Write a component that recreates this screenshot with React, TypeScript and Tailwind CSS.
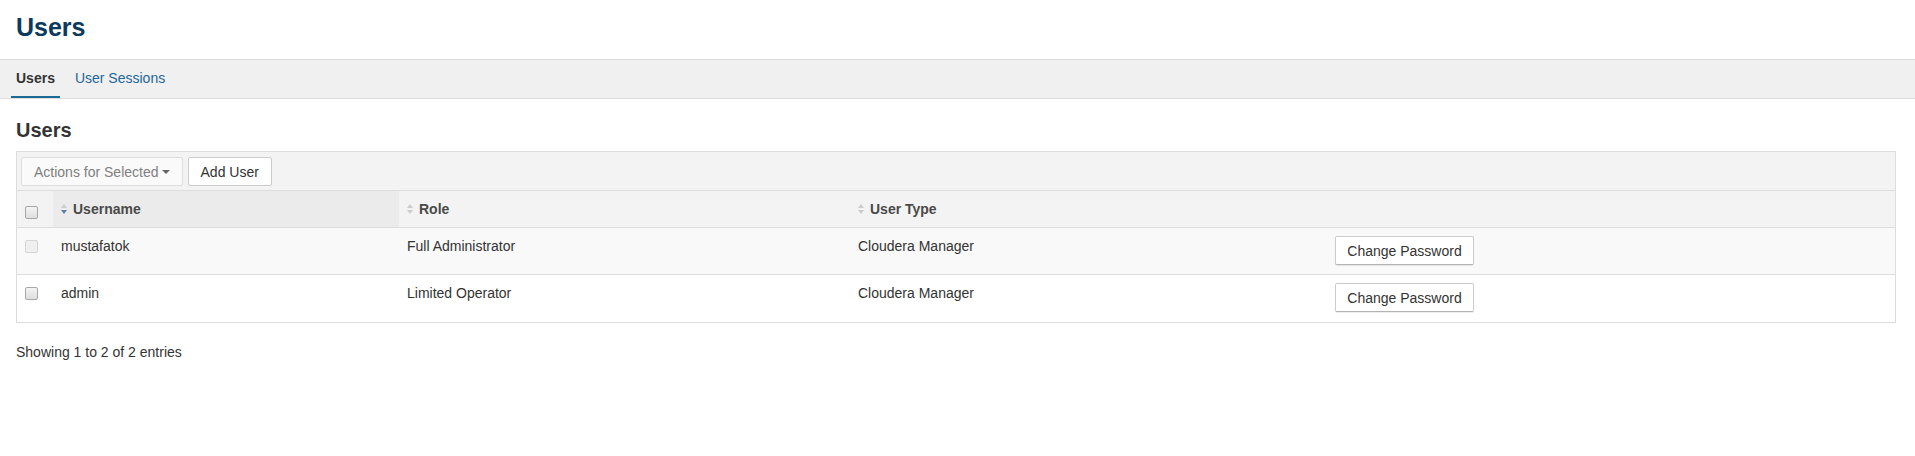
import React from "react";

const SortIcon = ({ active }: { active?: boolean }) => (
  <svg width="6" height="10" viewBox="0 0 6 10" className="shrink-0">
    <polygon points="0,4 3,0 6,4" fill={active ? "#c7ccd2" : "#cccccc"} />
    <polygon points="0,6 3,10 6,6" fill={active ? "#5f7f9f" : "#cccccc"} />
  </svg>
);

const Checkbox = ({ light }: { light?: boolean }) => (
  <div
    className={
      light
        ? "w-[13px] h-[13px] rounded-[2px] border border-[#d4d4d4] bg-[#efefef]"
        : "w-[13px] h-[13px] rounded-[2px] border border-[#a8a8a8] bg-gradient-to-b from-[#f4f4f4] to-[#dedede]"
    }
  />
);

const ChangeButton = () => (
  <button className="h-[29px] w-[139px] flex items-center justify-center bg-white border border-[#cccccc] border-b-[#b3b3b3] rounded-[2px] shadow-[0_1px_1px_rgba(0,0,0,0.08)] text-[14px] leading-[20px] text-[#333333]">
    Change Password
  </button>
);

const cols = "grid grid-cols-[36px_346px_451px_477px_1fr]";

export default function App() {
  const rows = [
    { name: "mustafatok", role: "Full Administrator", type: "Cloudera Manager", bg: "bg-[#f9f9f9]", light: true },
    { name: "admin", role: "Limited Operator", type: "Cloudera Manager", bg: "bg-white", light: false },
  ];
  return (
    <div className="w-[1915px] min-h-[456px] bg-white text-[#333333] font-['Liberation_Sans',Arial,sans-serif]">
      <div className="h-[59px] pl-4 pt-[13px]">
        <h1 className="text-[25px] leading-[28px] font-bold text-[#0c3a5c]">Users</h1>
      </div>
      <div className="h-[40px] bg-[#f0f0f0] border-t border-b border-[#dddddd] flex pl-[11px] gap-[10px]">
        <div className="px-[5px] pt-[8px] pb-[8px] border-b-2 border-[#1b6a96] text-[14px] leading-[20px] font-bold text-[#333333]">
          Users
        </div>
        <div className="px-[5px] pt-[8px] pb-[8px] text-[14px] leading-[20px] text-[#23679a]">
          User Sessions
        </div>
      </div>
      <div className="pl-4 pr-[19px]">
        <h2 className="mt-[20px] text-[20px] leading-[22px] font-bold text-[#333333]">Users</h2>
        <div className="mt-[10px] border border-[#dddddd]">
          <div className="h-[39px] bg-[#f3f3f3] border-b border-[#dddddd] flex items-start gap-[5px] pl-1 pt-[5px]">
            <button className="h-[29px] flex items-center px-3 bg-[#fafafa] border border-[#dddddd] rounded-[2px] text-[14px] leading-[20px] text-[#808080]">
              Actions for Selected
              <svg width="8" height="4" viewBox="0 0 8 4" className="ml-[3px]">
                <polygon points="0,0 8,0 4,4" fill="#666666" />
              </svg>
            </button>
            <button className="h-[29px] flex items-center px-3 bg-white border border-[#cccccc] rounded-[2px] text-[14px] leading-[20px] text-[#333333]">
              Add User
            </button>
          </div>
          <div className={`${cols} h-[37px] bg-[#f3f3f3] border-b border-[#dddddd] text-[14px] leading-[20px] font-bold text-[#4a4a4a]`}>
            <div className="pl-2 pt-[15px]">
              <Checkbox />
            </div>
            <div className="bg-[#ebebeb] px-2 pt-2 flex items-start gap-[6px]">
              <div className="pt-[5px]"><SortIcon active /></div>
              <span>Username</span>
            </div>
            <div className="px-2 pt-2 flex items-start gap-[6px]">
              <div className="pt-[5px]"><SortIcon /></div>
              <span>Role</span>
            </div>
            <div className="px-2 pt-2 flex items-start gap-[6px]">
              <div className="pt-[5px]"><SortIcon /></div>
              <span>User Type</span>
            </div>
            <div />
          </div>
          {rows.map((r, i) => (
            <div
              key={r.name}
              className={`${cols} h-[47px] ${r.bg} ${i === 0 ? "border-b border-[#dddddd]" : ""} text-[14px] leading-[20px] text-[#333333]`}
            >
              <div className="pl-2 pt-3">
                <Checkbox light={r.light} />
              </div>
              <div className="px-2 pt-2">{r.name}</div>
              <div className="px-2 pt-2">{r.role}</div>
              <div className="px-2 pt-2">{r.type}</div>
              <div className="px-2 pt-2">
                <ChangeButton />
              </div>
            </div>
          ))}
        </div>
        <div className="mt-[19px] text-[14px] leading-[20px] text-[#333333]">Showing 1 to 2 of 2 entries</div>
      </div>
    </div>
  );
}
